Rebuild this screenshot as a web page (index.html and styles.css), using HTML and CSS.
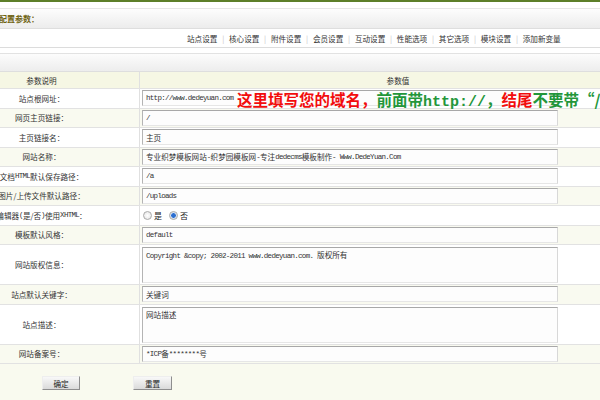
FILE: index.html
```html
<!DOCTYPE html>
<html lang="zh-CN">
<head>
<meta charset="utf-8">
<title>配置参数</title>
<link rel="stylesheet" href="styles.css">
</head>
<body>
<div class="topline"></div>
<div class="titlebar"><span class="title">配置参数：</span></div>
<div class="tabs">
  <span class="tab">站点设置</span><span class="sep">|</span>
  <span class="tab">核心设置</span><span class="sep">|</span>
  <span class="tab">附件设置</span><span class="sep">|</span>
  <span class="tab">会员设置</span><span class="sep">|</span>
  <span class="tab">互动设置</span><span class="sep">|</span>
  <span class="tab">性能选项</span><span class="sep">|</span>
  <span class="tab">其它选项</span><span class="sep">|</span>
  <span class="tab">模块设置</span><span class="sep">|</span>
  <span class="tab">添加新变量</span>
</div>
<div class="subbar"></div>
<div class="table">
  <div class="row head"><div class="lab">参数说明</div><div class="val center">参数值</div></div>
  <div class="row">
    <div class="lab">站点根网址：</div>
    <div class="val">
      <div class="inp"><span class="mono">http://www.dedeyuan.com</span></div>
      <div class="note"><span class="red">这里填写您的域名，</span><span class="green">前面带<span class="nmono">http://</span>，</span><span class="red">结尾</span><span class="green">不要带“/”</span></div>
    </div>
  </div>
  <div class="row alt"><div class="lab">网页主页链接：</div><div class="val"><div class="inp"><span class="mono">/</span></div></div></div>
  <div class="row"><div class="lab">主页链接名：</div><div class="val"><div class="inp">主页</div></div></div>
  <div class="row alt"><div class="lab">网站名称：</div><div class="val"><div class="inp">专业织梦模板网站<span class="mono">-</span>织梦园模板网<span class="mono">-</span>专注<span class="mono">dedecms</span>模板制作<span class="mono"> - Www.DedeYuan.Com</span></div></div></div>
  <div class="row"><div class="lab">文档<span class="lmono">HTML</span>默认保存路径：</div><div class="val"><div class="inp"><span class="mono">/a</span></div></div></div>
  <div class="row alt"><div class="lab">图片/上传文件默认路径：</div><div class="val"><div class="inp"><span class="mono">/uploads</span></div></div></div>
  <div class="row"><div class="lab">编辑器<span class="lmono">(</span>是/否<span class="lmono">)</span>使用<span class="lmono">XHTML</span>：</div>
    <div class="val"><span class="radio"></span><span class="rtext">是</span><span class="radio on"></span><span class="rtext">否</span></div></div>
  <div class="row alt"><div class="lab">模板默认风格：</div><div class="val"><div class="inp"><span class="mono">default</span></div></div></div>
  <div class="row tall"><div class="lab">网站版权信息：</div><div class="val top"><div class="ta"><span class="mono">Copyright &amp;copy; 2002-2011 www.dedeyuan.com. </span>版权所有</div></div></div>
  <div class="row alt"><div class="lab">站点默认关键字：</div><div class="val"><div class="inp">关键词</div></div></div>
  <div class="row tall"><div class="lab">站点描述：</div><div class="val top"><div class="ta">网站描述</div></div></div>
  <div class="row alt"><div class="lab">网站备案号：</div><div class="val"><div class="inp"><span class="mono">*ICP</span>备<span class="mono">********</span>号</div></div></div>
</div>
<div class="foot">
  <span class="btn">确定</span>
  <span class="btn second">重置</span>
</div>
</body>
</html>
```
FILE: styles.css
```css
html, body {
  margin: 0;
  padding: 0;
}
body {
  width: 600px;
  height: 400px;
  overflow: hidden;
  background: #fff;
  font-family: "Noto Sans CJK SC", "Noto Sans", sans-serif;
  font-size: 7.6px;
  color: #333;
}
.topline {
  height: 2px;
  background: #5d7f29;
}
.titlebar {
  margin-top: 6px;
  height: 19px;
  border-top: 1px solid #e6e6e6;
  border-bottom: 1px solid #dedede;
  background: linear-gradient(#fdfdfd, #ececec);
  display: flex;
  align-items: center;
}
.title {
  font-weight: bold;
  font-size: 8px;
  color: #6f6312;
  margin-left: -1px;
}
.tabs {
  height: 18px;
  display: flex;
  align-items: center;
  padding-left: 187px;
  border-bottom: 1px solid #dcdcdc;
  color: #333;
}
.sep {
  width: 11.6px;
  text-align: center;
  color: #c4c4c4;
}
.subbar {
  margin-top: 5px;
  height: 17px;
  border-top: 1px solid #e2e2e2;
  background: linear-gradient(#fcfcfc, #ededed);
}
.table {
  margin-left: -56px;
  width: 712px;
  border-top: 1px solid #dedede;
}
.row {
  display: grid;
  grid-template-columns: 196px 1fr;
  height: 19.5px;
  box-sizing: border-box;
  border-bottom: 1px solid #e2e2e2;
  background: #fff;
}
.row.alt {
  background: #f9faf0;
}
.row.head {
  height: 17px;
  background: #f6f7e4;
}
.row.tall {
  height: 40px;
}
.lab {
  border-right: 1px solid #e0e0e0;
  display: flex;
  align-items: center;
  justify-content: center;
  white-space: nowrap;
}
.val {
  display: flex;
  align-items: center;
  padding-left: 2px;
  position: relative;
  white-space: nowrap;
}
.val.center {
  justify-content: center;
  padding-left: 0;
}
.val.top {
  align-items: flex-start;
}
.inp {
  width: 416px;
  height: 16px;
  box-sizing: border-box;
  border: 1px solid;
  border-color: #a8a8a8 #d8d8d8 #e6e6e6 #b4b4b4;
  background: #fdfdfd;
  display: flex;
  align-items: center;
  padding-left: 3px;
  color: #333;
}
.ta {
  width: 416px;
  height: 36px;
  margin-top: 2px;
  box-sizing: border-box;
  border: 1px solid;
  border-color: #a8a8a8 #d8d8d8 #e6e6e6 #b4b4b4;
  background: #fdfdfd;
  padding: 2px 3px;
  line-height: 10px;
}
.mono, .lmono {
  font-family: "Liberation Mono", monospace;
  font-size: 7.5px;
  letter-spacing: -0.7px;
}
.note {
  position: absolute;
  left: 97px;
  top: 3px;
  font-size: 15.5px;
  font-weight: bold;
  line-height: 1;
  white-space: nowrap;
}
.red { color: #f20d0d; }
.green { color: #23963a; }
.nmono {
  font-family: "Liberation Mono", monospace;
  font-size: 15px;
  font-weight: bold;
}
.radio {
  width: 7px;
  height: 7px;
  border-radius: 50%;
  border: 1px solid #a9a9a9;
  background: radial-gradient(#ffffff, #e2e2e2);
  margin-left: 1px;
}
.radio.on {
  margin-left: 7px;
  background: radial-gradient(circle, #2d6fd0 0 2px, #bcd2ef 2.5px, #f0f0f0 3.5px);
}
.rtext {
  margin-left: 2px;
  font-size: 8px;
  color: #222;
}
.foot {
  height: 40px;
  background: #f9faef;
  display: flex;
  align-items: flex-start;
  padding-left: 42px;
  padding-top: 12px;
  box-sizing: border-box;
}
.btn {
  width: 38px;
  height: 14px;
  box-sizing: border-box;
  border: 1px solid;
  border-color: #eeeeee #8e8e8e #8e8e8e #eeeeee;
  background: linear-gradient(#f8f8f8, #dadada);
  display: flex;
  align-items: center;
  justify-content: center;
  color: #222;
}
.btn.second {
  margin-left: 53px;
  width: 39px;
}
```
